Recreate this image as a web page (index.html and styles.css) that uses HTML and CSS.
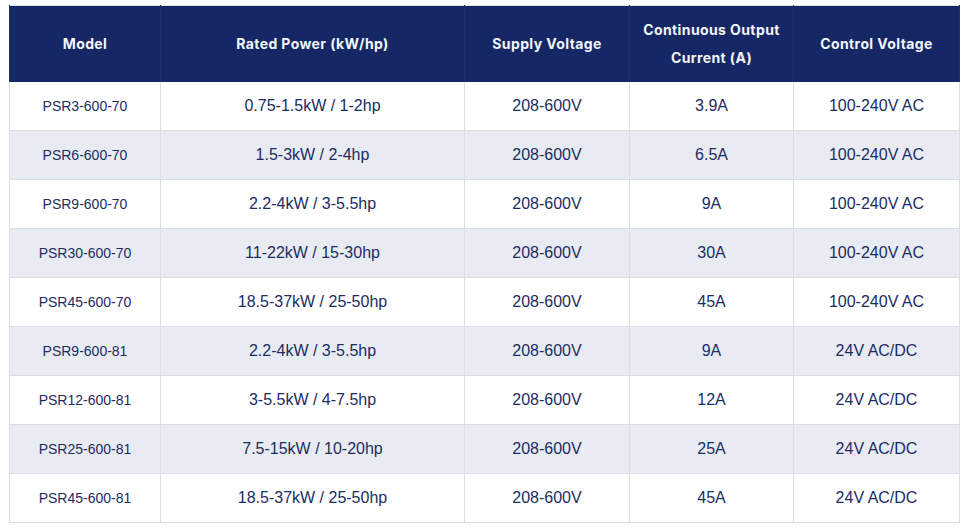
FILE: index.html
```html
<!DOCTYPE html>
<html>
<head>
<meta charset="utf-8">
<link rel="stylesheet" href="styles.css">
</head>
<body>
<div class="wrap">
<table class="spec">
<colgroup>
<col class="c1"><col class="c2"><col class="c3"><col class="c4"><col class="c5">
</colgroup>
<thead>
<tr>
<th>Model</th>
<th>Rated Power (kW/hp)</th>
<th>Supply Voltage</th>
<th>Continuous Output<br>Current (A)</th>
<th>Control Voltage</th>
</tr>
</thead>
<tbody>
<tr><td class="model">PSR3-600-70</td><td>0.75-1.5kW / 1-2hp</td><td>208-600V</td><td>3.9A</td><td>100-240V AC</td></tr>
<tr><td class="model">PSR6-600-70</td><td>1.5-3kW / 2-4hp</td><td>208-600V</td><td>6.5A</td><td>100-240V AC</td></tr>
<tr><td class="model">PSR9-600-70</td><td>2.2-4kW / 3-5.5hp</td><td>208-600V</td><td>9A</td><td>100-240V AC</td></tr>
<tr><td class="model">PSR30-600-70</td><td>11-22kW / 15-30hp</td><td>208-600V</td><td>30A</td><td>100-240V AC</td></tr>
<tr><td class="model">PSR45-600-70</td><td>18.5-37kW / 25-50hp</td><td>208-600V</td><td>45A</td><td>100-240V AC</td></tr>
<tr><td class="model">PSR9-600-81</td><td>2.2-4kW / 3-5.5hp</td><td>208-600V</td><td>9A</td><td>24V AC/DC</td></tr>
<tr><td class="model">PSR12-600-81</td><td>3-5.5kW / 4-7.5hp</td><td>208-600V</td><td>12A</td><td>24V AC/DC</td></tr>
<tr><td class="model">PSR25-600-81</td><td>7.5-15kW / 10-20hp</td><td>208-600V</td><td>25A</td><td>24V AC/DC</td></tr>
<tr><td class="model">PSR45-600-81</td><td>18.5-37kW / 25-50hp</td><td>208-600V</td><td>45A</td><td>24V AC/DC</td></tr>
</tbody>
</table>
</div>
</body>
</html>
```
FILE: styles.css
```css
html, body {
  margin: 0;
  padding: 0;
  background: #ffffff;
}
.wrap {
  padding: 5px 0 0 9px;
}
.spec {
  width: 950px;
  table-layout: fixed;
  border-collapse: collapse;
  border: 1px solid #dfe0e4;
  font-family: "Liberation Sans", Arial, sans-serif;
}
.c1 { width: 151px; }
.c2 { width: 304px; }
.c3 { width: 165px; }
.c4 { width: 164px; }
.c5 { width: 166px; }
.spec th {
  background: #152865;
  color: #f4f5f9;
  font-family: "Inter", "Open Sans", sans-serif;
  font-weight: 700;
  font-size: 14px;
  line-height: 28px;
  height: 76px;
  padding: 0 4px;
  box-sizing: border-box;
  text-align: center;
  vertical-align: middle;
  border-left: 1px solid #1c3070;
  border-right: 1px solid #1c3070;
  letter-spacing: 0.4px;
}
.spec td {
  height: 48px;
  padding: 0 6px;
  text-align: center;
  vertical-align: middle;
  font-size: 16px;
  color: #1b2d63;
  border: 1px solid #dcdee3;
  border-top: none;
}
.spec td.model {
  font-size: 14px;
}
.spec tbody tr:nth-child(even) td {
  background: #e8ebf2;
}
```
